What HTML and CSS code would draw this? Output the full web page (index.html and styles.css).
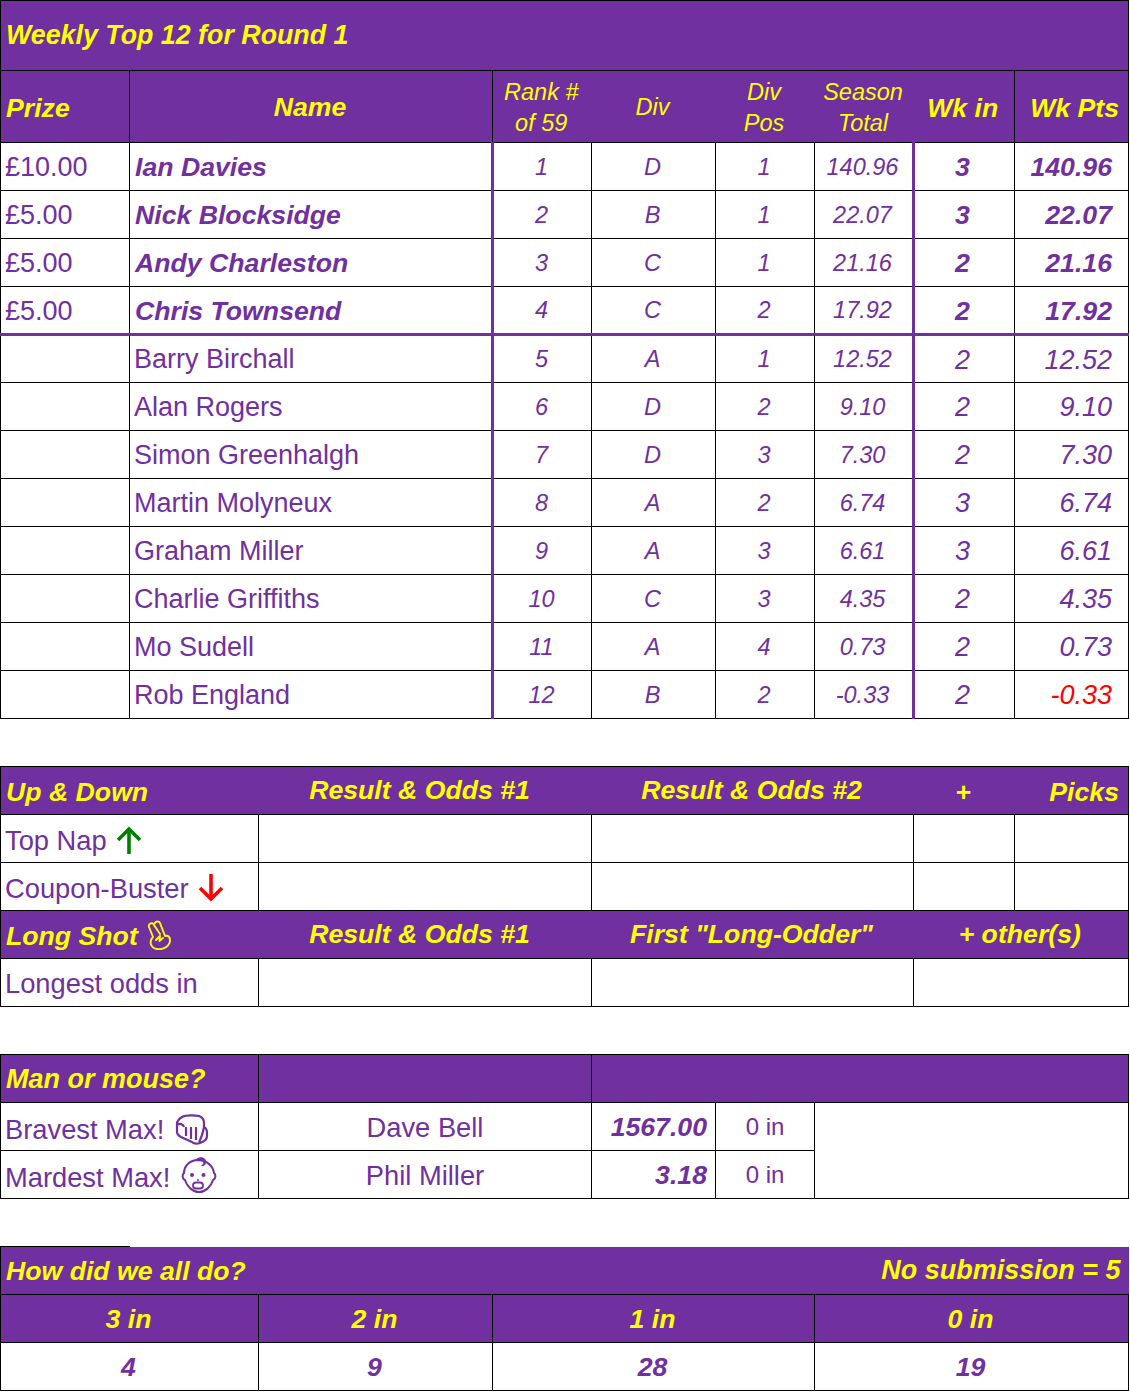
FILE: index.html
```html
<!DOCTYPE html>
<html lang="en">
<head>
<meta charset="utf-8">
<title>Weekly Top 12 for Round 1</title>
<link rel="stylesheet" href="styles.css">
</head>
<body>
<table class="sheet">
<colgroup>
<col class="c1"><col class="c2"><col class="c3"><col class="c4"><col class="c5"><col class="c6"><col class="c7"><col class="c8"><col class="c9">
</colgroup>
<tbody>
<tr class="r-title"><td colspan="9" class="hd lft title">Weekly Top 12 for Round 1</td></tr>
<tr class="r-head">
<td class="hd lft bd low1">Prize</td>
<td colspan="2" class="hd ctr bd">Name</td>
<td class="hs">Rank #<br>of 59</td>
<td class="hs">Div</td>
<td class="hs">Div<br>Pos</td>
<td class="hs">Season<br>Total</td>
<td class="hd ctr low1">Wk in</td>
<td class="hd rgt bd low1">Wk Pts</td>
</tr>
<tr class="row top"><td class="prize">£10.00</td><td colspan="2" class="name bn pr">Ian Davies</td><td class="n pl">1</td><td class="n">D</td><td class="n">1</td><td class="n pr">140.96</td><td class="wk bn">3</td><td class="pts bn">140.96</td></tr>
<tr class="row top"><td class="prize">£5.00</td><td colspan="2" class="name bn pr">Nick Blocksidge</td><td class="n pl">2</td><td class="n">B</td><td class="n">1</td><td class="n pr">22.07</td><td class="wk bn">3</td><td class="pts bn">22.07</td></tr>
<tr class="row top"><td class="prize">£5.00</td><td colspan="2" class="name bn pr">Andy Charleston</td><td class="n pl">3</td><td class="n">C</td><td class="n">1</td><td class="n pr">21.16</td><td class="wk bn">2</td><td class="pts bn">21.16</td></tr>
<tr class="row top last"><td class="prize">£5.00</td><td colspan="2" class="name bn pr">Chris Townsend</td><td class="n pl">4</td><td class="n">C</td><td class="n">2</td><td class="n pr">17.92</td><td class="wk bn">2</td><td class="pts bn">17.92</td></tr>
<tr class="row"><td class="prize"></td><td colspan="2" class="name pr">Barry Birchall</td><td class="n pl">5</td><td class="n">A</td><td class="n">1</td><td class="n pr">12.52</td><td class="wk it">2</td><td class="pts it">12.52</td></tr>
<tr class="row"><td class="prize"></td><td colspan="2" class="name pr">Alan Rogers</td><td class="n pl">6</td><td class="n">D</td><td class="n">2</td><td class="n pr">9.10</td><td class="wk it">2</td><td class="pts it">9.10</td></tr>
<tr class="row"><td class="prize"></td><td colspan="2" class="name pr">Simon Greenhalgh</td><td class="n pl">7</td><td class="n">D</td><td class="n">3</td><td class="n pr">7.30</td><td class="wk it">2</td><td class="pts it">7.30</td></tr>
<tr class="row"><td class="prize"></td><td colspan="2" class="name pr">Martin Molyneux</td><td class="n pl">8</td><td class="n">A</td><td class="n">2</td><td class="n pr">6.74</td><td class="wk it">3</td><td class="pts it">6.74</td></tr>
<tr class="row"><td class="prize"></td><td colspan="2" class="name pr">Graham Miller</td><td class="n pl">9</td><td class="n">A</td><td class="n">3</td><td class="n pr">6.61</td><td class="wk it">3</td><td class="pts it">6.61</td></tr>
<tr class="row"><td class="prize"></td><td colspan="2" class="name pr">Charlie Griffiths</td><td class="n pl">10</td><td class="n">C</td><td class="n">3</td><td class="n pr">4.35</td><td class="wk it">2</td><td class="pts it">4.35</td></tr>
<tr class="row"><td class="prize"></td><td colspan="2" class="name pr">Mo Sudell</td><td class="n pl">11</td><td class="n">A</td><td class="n">4</td><td class="n pr">0.73</td><td class="wk it">2</td><td class="pts it">0.73</td></tr>
<tr class="row"><td class="prize"></td><td colspan="2" class="name pr">Rob England</td><td class="n pl">12</td><td class="n">B</td><td class="n">2</td><td class="n pr">-0.33</td><td class="wk it">2</td><td class="pts it neg">-0.33</td></tr>

<tr class="gap"><td colspan="9"></td></tr>

<tr class="row band">
<td colspan="2" class="hd lft low2">Up &amp; Down</td>
<td colspan="2" class="hd ctr off">Result &amp; Odds #1</td>
<td colspan="3" class="hd ctr">Result &amp; Odds #2</td>
<td class="hd ctr low2">+</td>
<td class="hd rgt low2">Picks</td>
</tr>
<tr class="row">
<td colspan="2" class="lab low2"><div class="labin g-arrow">Top Nap
<svg width="26" height="28" viewBox="0 0 26 28" aria-hidden="true"><path d="M13 28V3M2 14L13 3L24 14" fill="none" stroke="#008000" stroke-width="3.6"/></svg></div></td>
<td colspan="2"></td><td colspan="3"></td><td></td><td></td>
</tr>
<tr class="row">
<td colspan="2" class="lab low2"><div class="labin g-arrow">Coupon-Buster
<svg width="26" height="28" viewBox="0 0 26 28" aria-hidden="true"><path d="M13 0V25M2 14L13 25L24 14" fill="none" stroke="#ff0000" stroke-width="3.6"/></svg></div></td>
<td colspan="2"></td><td colspan="3"></td><td></td><td></td>
</tr>
<tr class="row band">
<td colspan="2" class="hd lft low2"><div class="labin g-fing">Long Shot
<svg width="24" height="30" viewBox="0 0 24 30" aria-hidden="true"><path d="M6 17C2 21 3 28 10 29C17 30 23 26 23 20C23 17 21 15 18 16L13 3C12 1 9 1 8 3M6 17L2 7C1 3 6 2 7 5L13 14M9 20L13 16L12.500 21L16 18" fill="none" stroke="#ffff00" stroke-width="1.900" stroke-linejoin="round" stroke-linecap="round"/></svg></div></td>
<td colspan="2" class="hd ctr off">Result &amp; Odds #1</td>
<td colspan="3" class="hd ctr">First "Long-Odder"</td>
<td colspan="2" class="hd ctr">+ other(s)</td>
</tr>
<tr class="row">
<td colspan="2" class="lab low1">Longest odds in</td>
<td colspan="2"></td><td colspan="3"></td><td colspan="2"></td>
</tr>

<tr class="gap"><td colspan="9"></td></tr>

<tr class="row band">
<td colspan="2" class="hd lft bd big low1">Man or mouse?</td>
<td colspan="2" class="bd"></td>
<td colspan="5"></td>
</tr>
<tr class="row">
<td colspan="2" class="lab low3"><div class="labin g-fist">Bravest Max!
<svg width="34" height="32" viewBox="0 0 34 32" aria-hidden="true"><path d="M2 18V10C2 6 5 4 8 2.500C11 1 20 1 24 2C27 3 29 6 29 9V13C31 14 32 16 32 19V22C32 26 28 28 25 29C22 30 19 30 17 28L6 23C4 22 2 21 2 18ZM11 13V22M16 13V25M21 13V26M29 13C28 18 27 23 24 28M2 11C5 9 8 10 9 13" fill="none" stroke="#7030a0" stroke-width="2.200" stroke-linejoin="round"/></svg></div></td>
<td colspan="2" class="plain low1">Dave Bell</td>
<td class="odds bn low1">1567.00</td>
<td class="in">0 in</td>
<td rowspan="2" colspan="3"></td>
</tr>
<tr class="row">
<td colspan="2" class="lab low3"><div class="labin g-baby">Mardest Max!
<svg width="36" height="38" viewBox="0 0 36 38" aria-hidden="true"><path d="M16 4C7 5 3 11 3 17C1 18 1 23 4 24C6 31 12 36 18 36C24 36 30 31 32 24C35 23 35 18 33 17C32 10 26 4 16 4Z" fill="none" stroke="#7030a0" stroke-width="2"/><path d="M14 5C16 0 25 0 25 6C25 10 21 11 20 9C22 9 23 7 22 5.500C20 4 17 5 14 5Z" fill="#7030a0"/><circle cx="11" cy="19" r="2" fill="#7030a0"/><circle cx="22.500" cy="19" r="2" fill="#7030a0"/><circle cx="17" cy="24" r="1" fill="#7030a0"/><rect x="12" y="26.500" width="10" height="6" rx="3" fill="none" stroke="#7030a0" stroke-width="1.800"/></svg></div></td>
<td colspan="2" class="plain low1">Phil Miller</td>
<td class="odds bn low1">3.18</td>
<td class="in">0 in</td>
</tr>

<tr class="gap"><td colspan="9"></td></tr>

<tr class="row band">
<td class="hd lft edge low1">How did we all do?</td>
<td colspan="8" class="hd rgt nosub big">No submission = 5</td>
</tr>
<tr class="row band">
<td colspan="2" class="hd ctr bd low1">3 in</td>
<td class="hd ctr bd low1">2 in</td>
<td colspan="3" class="hd ctr bd low1">1 in</td>
<td colspan="3" class="hd ctr bd low1">0 in</td>
</tr>
<tr class="row">
<td colspan="2" class="tot low1">4</td>
<td class="tot low1">9</td>
<td colspan="3" class="tot low1">28</td>
<td colspan="3" class="tot low1">19</td>
</tr>
</tbody>
</table>
</body>
</html>
```
FILE: styles.css
```css
html, body {
  margin: 0;
  padding: 0;
  background: #fff;
}

.sheet {
  border-collapse: collapse;
  table-layout: fixed;
  width: 1129px;
  font-family: "Liberation Sans", Arial, sans-serif;
  color: #7030a0;
  font-size: 27px;
}

.c1 { width: 129px; }
.c2 { width: 129px; }
.c3 { width: 234px; }
.c4 { width: 99px; }
.c5 { width: 124px; }
.c6 { width: 99px; }
.c7 { width: 99px; }
.c8 { width: 101px; }
.c9 { width: 114px; }

td {
  box-sizing: border-box;
  padding: 0;
  line-height: 1;
  white-space: nowrap;
  border: 1px solid #000;
}

.r-title td { height: 70px; }
.r-head td { height: 72px; }
.row td { height: 48px; }
.gap td { height: 48px; border: none; }
.r-title td, .r-head td, .band td { background: #7030a0; }

.r-head td, .r-title td, .band td {
  border-top: 1px solid #000;
  border-bottom: 1px solid #000;
  border-left: none;
  border-right: none;
}
.r-head td:first-child, .r-title td:first-child, .band td:first-child { border-left: 1px solid #000; }
.r-head td:last-child, .r-title td:last-child, .band td:last-child { border-right: 1px solid #000; }
.r-head td.bd, .band td.bd { border-left: 1px solid #000; border-right: 1px solid #000; }

.hd { font-weight: bold; font-style: italic; color: #ff0; font-size: 26.67px; }
.hd.big { font-size: 27px; }
.hd.title { font-size: 26.800px; }
.r-head .hd { padding-top: 2px; }
.hs {
  font-style: italic;
  font-size: 23.500px;
  line-height: 31px;
  color: #ff0;
  text-align: center;
  padding-right: 2px;
  padding-top: 2px;
}
.lft { text-align: left; padding-left: 5px; }
.ctr { text-align: center; padding-right: 2px; }
.rgt { text-align: right; padding-right: 9px; }
.hd.off { padding-right: 11px; }

.bn { font-weight: bold; font-size: 26.67px; }
.it { font-style: italic; }
.neg { color: #f00; }

.prize { padding-top: 2px; padding-left: 4px; }
.name { padding-left: 4px; padding-top: 2px; }
.last + .row .name { padding-top: 0; }
.top .name { font-style: italic; padding-left: 5px; }
.n { font-style: italic; font-size: 23.500px; text-align: center; padding-right: 2px; padding-top: 2px; }
.wk { text-align: center; padding-top: 2px; padding-right: 4px; }
.top .wk, .top .pts { font-style: italic; }
.pts { text-align: right; padding-top: 2px; padding-right: 16px; }

td.pr { border-right: 3px solid #7030a0; }
td.pl { border-left: 3px solid #7030a0; }
.last td { border-bottom: 3px solid #7030a0; }

.lab { font-size: 27.300px; padding-left: 4px; }
.labin { display: flex; align-items: center; }
.g-arrow { gap: 9px; }
.g-arrow svg { margin-top: -1px; }
.g-fing { gap: 9px; }
.g-fing svg { margin-top: -3px; }
.g-fist { gap: 11px; }
.g-baby { gap: 11px; }
.g-baby svg { margin-top: -5px; }
.plain { font-size: 27.300px; text-align: center; }
.odds { font-style: italic; text-align: right; padding-right: 8px; }
.in { font-size: 24px; text-align: center; }
.tot { font-weight: bold; font-style: italic; text-align: center; font-size: 26.67px; padding-right: 2px; }

.band td.edge { border-right: none; }
.band td.nosub { border-top: none; border-right: none; padding-right: 8px; }

td.low1, .r-head td.low1 { padding-top: 4px; }
.row td.low1 { padding-top: 2px; }
td.low2 { padding-top: 4px; }
td.low3 { padding-top: 6px; }
td.low4 { padding-top: 8px; }
```
